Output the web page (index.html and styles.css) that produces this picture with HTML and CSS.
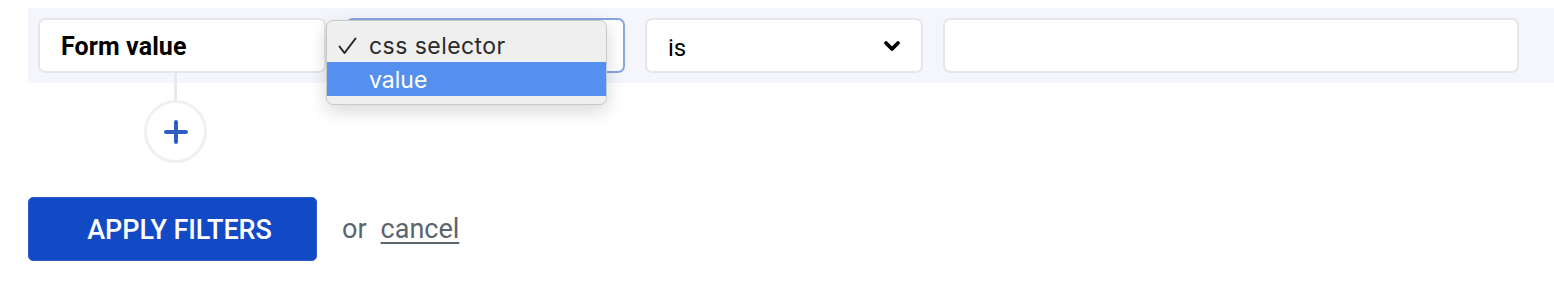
FILE: index.html
```html
<!DOCTYPE html>
<html lang="en">
<head>
<meta charset="utf-8">
<title>Filters</title>
<link rel="stylesheet" href="styles.css">
</head>
<body>
<div class="page">
  <div class="filter-row">
    <div class="field field-name">Form value</div>
    <div class="field field-type focused"></div>
    <div class="field field-op">
      <span>is</span>
      <svg class="chevron" width="18" height="12" viewBox="0 0 18 12"><path d="M3 3 L9 9 L15 3" fill="none" stroke="#000" stroke-width="3.8" stroke-linecap="round" stroke-linejoin="round"/></svg>
    </div>
    <div class="field field-value"></div>
  </div>

  <div class="connector">
    <div class="connector-line"></div>
    <div class="add-btn">
      <svg width="24" height="24" viewBox="0 0 24 24"><path d="M12 2 V22 M2 12 H22" stroke="#2f5dc2" stroke-width="4" stroke-linecap="round"/></svg>
    </div>
  </div>

  <div class="actions">
    <button class="apply">APPLY FILTERS</button>
    <span class="or">or</span>
    <a class="cancel" href="#">cancel</a>
  </div>

  <div class="menu">
    <div class="menu-item">
      <svg class="check" width="19" height="18" viewBox="0 0 19 18"><path d="M1.5 9.5 L6.5 16 L17.5 1.5" fill="none" stroke="#262626" stroke-width="2" stroke-linecap="round" stroke-linejoin="round"/></svg>
      <span>css selector</span>
    </div>
    <div class="menu-item selected"><span>value</span></div>
  </div>
</div>
</body>
</html>
```

FILE: styles.css
```css
* { box-sizing: border-box; }

html, body {
  margin: 0;
  padding: 0;
  background: #ffffff;
  overflow: hidden;
}

body {
  font-family: Roboto, "Liberation Sans", sans-serif;
  color: #000;
}

.page {
  position: relative;
  width: 1554px;
  height: 292px;
  padding-top: 8px;
}

.filter-row {
  margin-left: 28px;
  background: #f5f6fb;
  padding: 10px 0 10px 10px;
  display: flex;
  gap: 20px;
  height: 75px;
}

.field {
  height: 55px;
  background: #fff;
  border: 2px solid #e4e6ea;
  border-radius: 7px;
  display: flex;
  align-items: center;
}

.field-name {
  width: 288px;
  padding: 2px 0 0 21px;
  font-size: 25px;
  font-weight: 700;
  letter-spacing: 0.1px;
}

.field-type {
  width: 279px;
}

.field-type.focused {
  border-color: #8aa4e4;
}

.field-op {
  width: 278px;
  padding: 0 20px 0 21px;
  justify-content: space-between;
  font-size: 24px;
}

.field-op span {
  padding-top: 4px;
}

.field-value {
  width: 576px;
}

.connector {
  margin-left: 144px;
  margin-top: -10px;
  width: 63px;
  display: flex;
  flex-direction: column;
  align-items: center;
}

.connector-line {
  width: 3px;
  height: 27px;
  background: #e8e9ec;
}

.add-btn {
  width: 63px;
  height: 63px;
  border: 3px solid #eef0f3;
  border-radius: 50%;
  background: #fff;
  display: flex;
  align-items: center;
  justify-content: center;
}

.actions {
  margin-left: 28px;
  margin-top: 34px;
  display: flex;
  align-items: center;
}

.apply {
  width: 289px;
  height: 64px;
  background: #1249c4;
  border: 1px solid #2b5cd0;
  border-radius: 5px;
  color: #fff;
  font-family: Roboto, "Liberation Sans", sans-serif;
  font-size: 27px;
  font-weight: 500;
  letter-spacing: -0.1px;
  padding: 2px 0 0 14px;
  text-align: center;
}

.or {
  margin-left: 25px;
  font-size: 27px;
  color: #5b6570;
}

.cancel {
  margin-left: 14px;
  font-size: 27px;
  color: #5b6570;
  text-decoration: underline;
  text-underline-offset: 4px;
  text-decoration-thickness: 2px;
}

.menu {
  position: absolute;
  left: 326px;
  top: 20px;
  width: 281px;
  height: 85px;
  background: #efefef;
  border: 1px solid #c9c9c9;
  border-radius: 7px;
  box-shadow: 0 6px 18px rgba(0, 0, 0, 0.16);
  padding-top: 7px;
  font-family: Inter, "Noto Sans", sans-serif;
  font-size: 23px;
  color: #2a2a2a;
}

.menu-item {
  height: 34px;
  display: flex;
  align-items: center;
  padding-left: 42px;
  position: relative;
}

.menu-item span {
  padding-top: 1px;
}

.menu-item:first-child span {
  letter-spacing: 0.45px;
}

.menu-item .check {
  position: absolute;
  left: 11px;
  top: 9px;
}

.menu-item.selected {
  background: #5690ee;
  color: #fff;
}
```
